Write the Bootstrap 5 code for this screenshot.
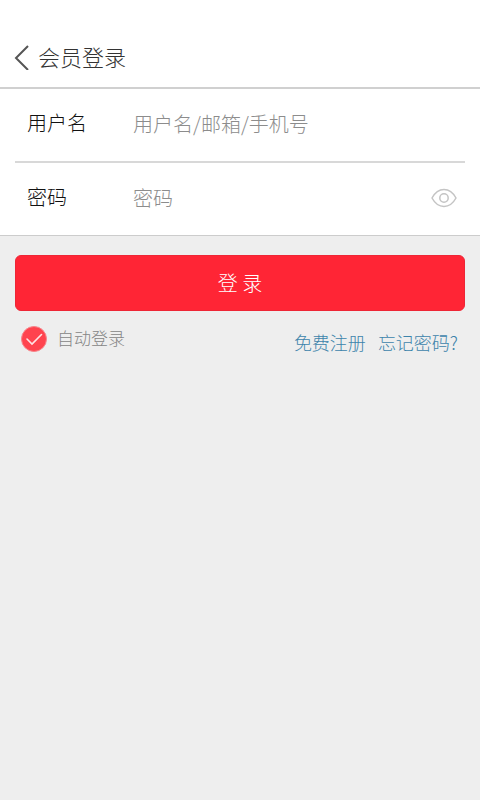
<!DOCTYPE html>
<html lang="zh-CN">
<head>
<meta charset="utf-8">
<meta name="viewport" content="width=device-width, initial-scale=1">
<title>会员登录</title>
<link href="https://cdn.jsdelivr.net/npm/bootstrap@5.3.0/dist/css/bootstrap.min.css" rel="stylesheet">
<style>
  body { background: #eee; font-family: "Noto Sans CJK SC", sans-serif; font-weight: 300; line-height: 28px; }
  .login-header { padding: 41px 14px 16px; border-bottom: 2px solid #d0d0d0; }
  .login-header h1 { font-size: 22px; line-height: 30px; font-weight: 300; color: #333; }
  .back-link { color: #555; width: 24px; line-height: 30px; }
  .side-pad { padding-left: 15px; padding-right: 15px; }
  .fields { border-bottom: 1px solid #ccc; }
  .field-row { padding: 0 8px 2px 12px; font-size: 20px; }
  .field-row:first-child { height: 72px; }
  .field-row + .field-row { height: 74px; border-top: 2px solid #d8d8d8; }
  .field-row label { width: 106px; color: #111; padding-bottom: 2px; }
  .field-input, .field-input:focus { font-size: 20px; font-weight: 300; color: #222; background: transparent; box-shadow: none; line-height: 30px; }
  .field-input::placeholder { color: #8c8c8c; }
  .eye-btn { color: #c4c4c4; }
  .login-btn { --bs-btn-bg: #ff2535; --bs-btn-hover-bg: #ec1f2e; --bs-btn-active-bg: #d91b29; --bs-btn-color: #fff; --bs-btn-hover-color: #fff; --bs-btn-active-color: #fff; --bs-btn-border-color: #ee2535; --bs-btn-border-radius: 6px; height: 56px; font-size: 20px; font-weight: 300; }
  .login-main { padding-top: 19px; }
  .options { padding: 13px 7px 0 6px; font-size: 17px; }
  .round-check.form-check-input { width: 26px; height: 26px; border-radius: 50%; border-color: #ccc; margin-top: 2px; }
  .round-check.form-check-input:checked { background-color: #ff434e; border-color: #f7858b; background-image: url("data:image/svg+xml,%3Csvg xmlns='http://www.w3.org/2000/svg' viewBox='0 0 24 24'%3E%3Cpath d='M5 12l5 5L19.500 7.500' fill='none' stroke='%23ffe4e5' stroke-width='1.600' stroke-linecap='round'/%3E%3C/svg%3E"); }
  .options label { color: #858585; padding-left: 10px; }
  .option-links { gap: 12px; padding-top: 4px; font-size: 18px; }
  .option-links a { color: #3d84ab; }
</style>
</head>
<body>
<header class="login-header bg-white d-flex align-items-center">
  <a href="#" class="back-link d-flex align-items-center" aria-label="返回">
    <svg width="16" height="28" viewBox="0 0 16 28" fill="none" stroke="currentColor" stroke-width="2" aria-hidden="true"><path d="M14 4 2 16l12 12"/></svg>
  </a>
  <h1 class="mb-0">会员登录</h1>
</header>
<form>
  <div class="fields bg-white">
    <div class="side-pad">
      <div class="field-row d-flex align-items-center">
        <label for="username" class="flex-shrink-0">用户名</label>
        <input id="username" type="text" class="field-input form-control border-0 p-0" placeholder="用户名/邮箱/手机号" autocomplete="username">
      </div>
      <div class="field-row d-flex align-items-center">
        <label for="password" class="flex-shrink-0">密码</label>
        <input id="password" type="password" class="field-input form-control border-0 p-0" placeholder="密码" autocomplete="current-password">
        <button type="button" class="eye-btn btn border-0 p-0 d-flex" aria-label="显示密码">
          <svg width="26" height="20" viewBox="0 0 26 20" fill="none" stroke="currentColor" stroke-width="1.500" aria-hidden="true"><path d="M1 10C4 4.500 8 1.500 13 1.500s9 3 12 8.500c-3 5.500-7 8.500-12 8.500S4 15.500 1 10Z"/><circle cx="13" cy="10" r="4.200"/></svg>
        </button>
      </div>
    </div>
  </div>
  <main class="login-main side-pad">
    <button type="submit" class="login-btn btn w-100">登 录</button>
    <div class="options d-flex justify-content-between align-items-start">
      <div class="d-flex align-items-start">
        <input id="auto-login" type="checkbox" class="round-check form-check-input" checked>
        <label for="auto-login">自动登录</label>
      </div>
      <div class="option-links d-flex">
        <a href="#" class="text-decoration-none">免费注册</a>
        <a href="#" class="text-decoration-none">忘记密码?</a>
      </div>
    </div>
  </main>
</form>
<script src="https://cdn.jsdelivr.net/npm/bootstrap@5.3.0/dist/js/bootstrap.bundle.min.js"></script>
</body>
</html>
